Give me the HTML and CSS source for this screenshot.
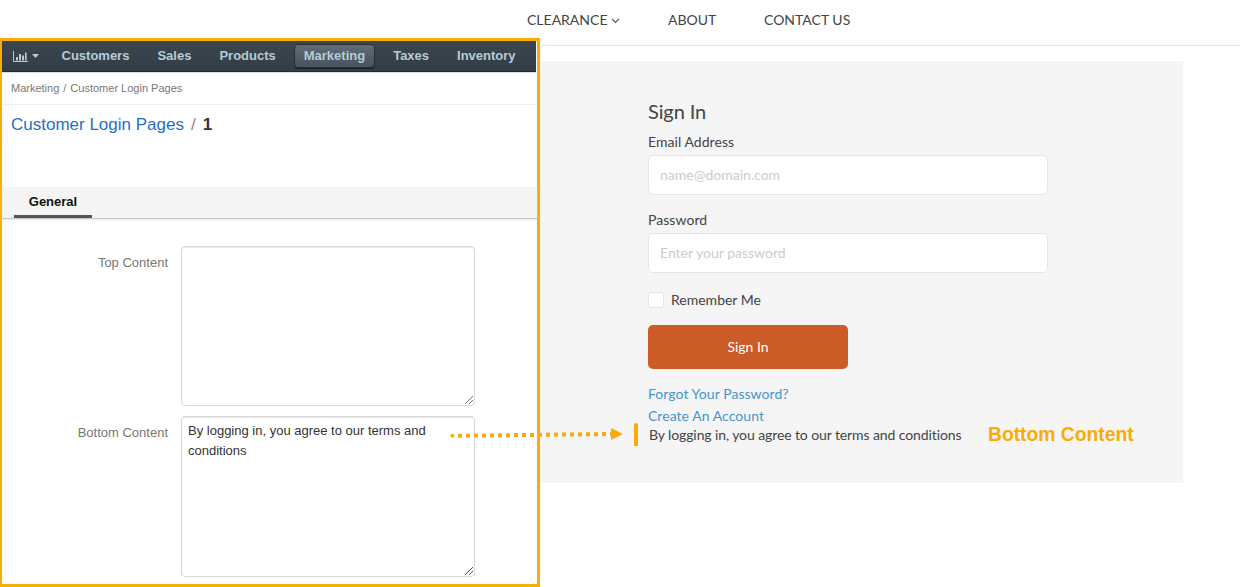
FILE: index.html
```html
<!DOCTYPE html>
<html lang="en">
<head>
<meta charset="utf-8">
<title>Customer Login Pages</title>
<link rel="stylesheet" href="styles.css">
</head>
<body>
<div class="store">
  <nav class="store-nav">
    <a class="store-link clearance">CLEARANCE<svg class="chevron" width="9" height="6" viewBox="0 0 9 6"><path d="M1 1l3.5 3.5L8 1" fill="none" stroke="#555" stroke-width="1.1"/></svg></a>
    <a class="store-link about">ABOUT</a>
    <a class="store-link contact">CONTACT US</a>
  </nav>
  <main class="login">
    <h1 class="login-title">Sign In</h1>
    <label class="field-label" for="email">Email Address</label>
    <input class="field" id="email" type="email" placeholder="name@domain.com">
    <label class="field-label" for="password">Password</label>
    <input class="field" id="password" type="password" placeholder="Enter your password">
    <div class="remember"><span class="checkbox"></span><span class="remember-text">Remember Me</span></div>
    <button class="submit">Sign In</button>
    <a class="login-link forgot">Forgot Your Password?</a>
    <a class="login-link create">Create An Account</a>
    <p class="terms">By logging in, you agree to our terms and conditions</p>
  </main>
</div>

<section class="admin">
  <nav class="admin-nav">
    <span class="chart-menu">
      <svg width="16" height="13" viewBox="0 0 16 13"><path d="M1.5 1v10.5H16" stroke="#b6cbd6" fill="none"/><path d="M4 7h2v3.5H4zM7 4h2v6.5H7zM10 5.5h2v5h-2zM13 2.5h1.6v8H13z" fill="#b6cbd6"/></svg>
      <svg width="7" height="4" viewBox="0 0 7 4"><path d="M0 0h7L3.5 4z" fill="#b6cbd6"/></svg>
    </span>
    <a class="admin-item">Customers</a>
    <a class="admin-item">Sales</a>
    <a class="admin-item">Products</a>
    <a class="admin-item active">Marketing</a>
    <a class="admin-item">Taxes</a>
    <a class="admin-item">Inventory</a>
  </nav>
  <div class="breadcrumb">Marketing<span class="crumb-sep">/</span>Customer Login Pages</div>
  <h2 class="page-title"><a class="title-link">Customer Login Pages</a><span class="title-sep">/</span><b class="title-id">1</b></h2>
  <div class="tabs"><span class="tab">General</span></div>
  <div class="form">
    <div class="row"><label class="row-label" for="top">Top Content</label>
      <div class="area" id="top"><svg class="grip" width="10" height="10" viewBox="0 0 10 10"><path d="M1 9L9 1M5 9l4-4" stroke="#777" fill="none"/></svg></div></div>
    <div class="row"><label class="row-label" for="bottom">Bottom Content</label>
      <div class="area" id="bottom">By logging in, you agree to our terms and conditions<svg class="grip" width="10" height="10" viewBox="0 0 10 10"><path d="M1 9L9 1M5 9l4-4" stroke="#555" fill="none"/></svg></div></div>
  </div>
</section>

<svg class="arrow" width="176" height="16" viewBox="0 0 176 16">
  <path d="M4 9.8L162 8" stroke="#f9ac08" stroke-width="4" stroke-dasharray="4 4" stroke-dashoffset="4" fill="none"/>
  <circle cx="2.4" cy="9.8" r="2" fill="#f9ac08"/>
  <path d="M161 2v12l12-6z" fill="#f9ac08"/>
</svg>
<span class="marker"></span>
<strong class="callout">Bottom Content</strong>
</body>
</html>
```

FILE: styles.css
```css
* { box-sizing: border-box; }
body {
  margin: 0;
  height: 587px;
  overflow: hidden;
  position: relative;
  background: #fff;
  font-family: Lato, sans-serif;
  font-size: 14px;
  font-variant-ligatures: none;
  color: #444;
}
.store-nav {
  display: flex;
  height: 46px;
  padding-left: 527px;
  border-bottom: 1px solid #e7e7e7;
  line-height: 40px;
}
.store-link { white-space: nowrap; color: #444; }
.clearance { width: 141px; }
.about { width: 96px; }
.chevron { margin-left: 4px; vertical-align: 1px; }

.login {
  display: flex;
  flex-direction: column;
  width: 646px;
  height: 422px;
  margin: 15px 0 0 537px;
  padding: 37px 0 0 111px;
  background: #f5f5f5;
}
.login-title { height: 27px; margin: 0; font-size: 20px; font-weight: 400; line-height: 26px; letter-spacing: -0.1px; }
.field-label { height: 30px; line-height: 34px; letter-spacing: 0.05px; }
.field {
  width: 400px;
  height: 40px;
  margin-bottom: 8px;
  padding: 0 11px 2px;
  border: 1px solid #e6e6e6;
  border-radius: 5px;
  background: #fff;
  font: 14px Lato, sans-serif;
}
.field::placeholder { color: #ccc; opacity: 1; }
.remember { display: flex; gap: 7px; height: 16px; margin-top: 11px; }
.remember-text { line-height: 16px; }
.checkbox { width: 16px; height: 16px; border: 1px solid #e6e6e6; border-radius: 3px; background: #fff; }
.submit {
  width: 200px;
  height: 44px;
  margin-top: 17px;
  padding: 0 0 2px;
  border: 0;
  border-radius: 5px;
  background: #cb5c27;
  color: #fff;
  font: 14px Lato, sans-serif;
}
.login-link { height: 22px; line-height: 22px; color: #4496cb; letter-spacing: 0.05px; }
.forgot { margin-top: 14px; }
.terms { margin: -2px 0 0 1px; line-height: 20px; letter-spacing: -0.1px; }

.admin {
  position: absolute;
  left: 0;
  top: 38px;
  width: 540px;
  height: 549px;
  border: 3px solid #f9ac08;
  border-left-width: 2px;
  background: #fff;
  font-family: "Liberation Sans", Arial, sans-serif;
  font-size: 13px;
}
.admin-nav {
  display: flex;
  align-items: flex-start;
  gap: 8px;
  width: 534px;
  height: 31px;
  padding-top: 3px;
  border-bottom: 1px solid #1f2931;
  background: linear-gradient(#3b464f, #323d46);
  box-shadow: 0 1px 0 #ddd;
}
.chart-menu { display: flex; align-items: center; gap: 4px; width: 41.5px; height: 24px; padding-left: 10px; }
.admin-item {
  height: 24px;
  padding: 0 9px;
  border: 1px solid transparent;
  border-radius: 4px;
  line-height: 21px;
  font-weight: 700;
  color: #b6cbd6;
}
.admin-item.active {
  background: linear-gradient(#606b77, #47535d);
  border-color: #252f38;
  box-shadow: 0 1px 0 #161e24;
}
.breadcrumb {
  height: 33px;
  padding-left: 9px;
  border-bottom: 1px solid #f0f0f0;
  font-size: 11px;
  line-height: 33px;
  color: #777;
}
.crumb-sep { margin: 0 4px; }
.page-title { height: 82px; margin: 0; padding: 10px 0 0 9px; font-size: 17px; font-weight: 400; line-height: 20px; }
.title-link { color: #1f6fc4; }
.title-sep { margin: 0 7px 0 7px; color: #888; }
.title-id { color: #333; }
.tabs { height: 32px; padding-left: 12px; background: #f5f5f5; border-bottom: 1px solid #c8c8c8; box-shadow: 0 1px 1px #eee; }
.tab {
  display: block;
  width: 78px;
  height: 31px;
  border-bottom: 3px solid #555;
  font-size: 13px;
  font-weight: 700;
  line-height: 30px;
  text-align: center;
  color: #111;
}
.form { display: flex; flex-direction: column; gap: 10px; padding-top: 27px; }
.row { display: flex; }
.row-label { width: 166px; margin-right: 13px; line-height: 33px; text-align: right; color: #777; }
.area {
  position: relative;
  width: 294px;
  height: 160px;
  padding: 4px 6px;
  border: 1px solid #d8d8d8;
  border-radius: 4px;
  box-shadow: inset 0 1px 1px #e8e8e8;
  line-height: 20px;
  color: #333;
}
#bottom { height: 161px; }
.grip { position: absolute; right: 0; bottom: 0; }

.arrow { position: absolute; left: 450px; top: 426px; }
.marker { position: absolute; left: 634px; top: 423px; width: 4px; height: 23px; border-radius: 2px 2px 0 0; background: #f9ac08; }
.callout {
  position: absolute;
  left: 988px;
  top: 423px;
  font: 700 19.3px/24px "Liberation Sans", Arial, sans-serif;
  white-space: nowrap;
  color: #f9ac08;
}
```
